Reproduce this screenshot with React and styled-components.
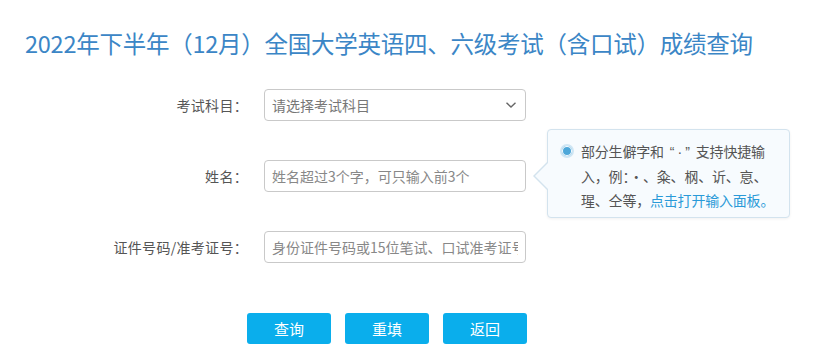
import React from "react";
import styled, { createGlobalStyle } from "styled-components";

const GlobalStyle = createGlobalStyle`
  body {
    margin: 0;
    background: #fff;
    font-family: "Noto Sans CJK SC", "Noto Sans", sans-serif;
  }
`;

export default function App() {
  return (
    <Page>
      <GlobalStyle />
      <Title>2022年下半年（12月）全国大学英语四、六级考试（含口试）成绩查询</Title>
      <Form>
        <Row>
          <Label>考试科目：</Label>
          <SelectBox>
            <span>请选择考试科目</span>
            <svg width="12" height="8" viewBox="0 0 12 8">
              <path d="M1.5 1.8 L6 6 L10.5 1.8" fill="none" stroke="#666" strokeWidth="1.4" />
            </svg>
          </SelectBox>
        </Row>
        <Row>
          <Label>姓名：</Label>
          <Field>
            <Input placeholder="姓名超过3个字，可只输入前3个" />
            <Tip>
              <Radio />
              <TipText>
                <Line>
                  部分生僻字和<Quote>“·”</Quote>支持快捷输
                </Line>
                <Line>入，例：·、粂、㭎、䜣、恴、</Line>
                <Line>
                  瑆、仝等，<TipLink>点击打开输入面板。</TipLink>
                </Line>
              </TipText>
            </Tip>
          </Field>
        </Row>
        <Row>
          <Label>证件号码/准考证号：</Label>
          <Input placeholder="身份证件号码或15位笔试、口试准考证号" />
        </Row>
        <Buttons>
          <Button>查询</Button>
          <Button>重填</Button>
          <Button>返回</Button>
        </Buttons>
      </Form>
    </Page>
  );
}

const Page = styled.div`
  width: 826px;
  height: 354px;
  overflow: hidden;
`;

const Title = styled.h1`
  margin: 0;
  padding: 28px 0 0 25px;
  height: 61px;
  box-sizing: border-box;
  font-size: 23.5px;
  font-weight: normal;
  line-height: 30px;
  color: #3b86c6;
  letter-spacing: -0.25px;
`;

const Form = styled.div`
  display: flex;
  flex-direction: column;
  gap: 39px;
  padding-top: 28px;
`;

const Row = styled.div`
  display: grid;
  grid-template-columns: 248px 262px;
  column-gap: 16px;
  align-items: center;
  height: 32px;
`;

const Label = styled.label`
  text-align: right;
  font-size: 14px;
  color: #555;
  letter-spacing: 0.3px;
`;

const Field = styled.div`
  position: relative;
  height: 32px;
`;

const Input = styled.input`
  box-sizing: border-box;
  width: 262px;
  height: 32px;
  padding: 0 7px;
  border: 1px solid #c9c9c9;
  border-radius: 4px;
  font-family: inherit;
  font-size: 14px;
  color: #333;
  outline: none;
  &::placeholder {
    color: #888;
  }
`;

const SelectBox = styled.div`
  box-sizing: border-box;
  width: 262px;
  height: 32px;
  padding: 0 8px 0 7px;
  border: 1px solid #c9c9c9;
  border-radius: 4px;
  display: flex;
  align-items: center;
  justify-content: space-between;
  font-size: 14px;
  color: #777;
`;

const Tip = styled.div`
  position: absolute;
  left: 283px;
  top: -31px;
  width: 243px;
  height: 89px;
  box-sizing: border-box;
  padding: 9px 8px 0 12px;
  display: flex;
  align-items: flex-start;
  gap: 7px;
  background: #f7fbfe;
  border: 1px solid #d3e3ee;
  border-radius: 4px;
  box-shadow: 0 1px 3px rgba(0, 0, 0, 0.06);

  &::before,
  &::after {
    content: "";
    position: absolute;
    top: 31px;
    width: 0;
    height: 0;
    border-style: solid;
    border-width: 15px 15px 15px 0;
  }
  &::before {
    left: -15px;
    border-color: transparent #d3e3ee transparent transparent;
  }
  &::after {
    left: -13px;
    border-color: transparent #f7fbfe transparent transparent;
  }
`;

const Radio = styled.span`
  flex: none;
  margin-top: 5px;
  width: 14px;
  height: 14px;
  box-sizing: border-box;
  border-radius: 50%;
  border: 2px solid #cfe6f4;
  background: #4da7d9;
  box-shadow: inset 0 0 0 1px #fff;
`;

const TipText = styled.div`
  font-size: 14px;
  line-height: 24px;
  color: #555;
`;

const Line = styled.div`
  white-space: nowrap;
  letter-spacing: -0.2px;
`;

const Quote = styled.span`
  font-family: "Liberation Sans", sans-serif;
  letter-spacing: 3px;
  padding: 0 3px 0 6px;
`;

const TipLink = styled.span`
  color: #2a9ad8;
  cursor: pointer;
`;

const Buttons = styled.div`
  display: flex;
  gap: 14px;
  padding-left: 247px;
  margin-top: 11px;
`;

const Button = styled.button`
  width: 84px;
  height: 31px;
  border: none;
  border-radius: 3px;
  background: #0aaeec;
  color: #fff;
  font-family: inherit;
  font-size: 15px;
  cursor: pointer;
`;
